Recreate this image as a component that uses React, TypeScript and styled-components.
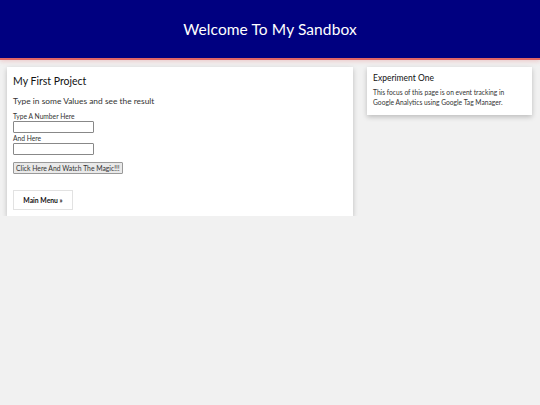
import styled, { createGlobalStyle } from 'styled-components';

const GlobalStyle = createGlobalStyle`
  html, body {
    margin: 0;
    padding: 0;
    background: #f1f1f1;
    font-family: Lato, "Open Sans", sans-serif;
    color: #111;
  }
`;

const Header = styled.header`
  height: 58px;
  background: #000080;
  border-bottom: 2px solid #e06666;
  box-shadow: 0 2px 4px rgba(230, 120, 120, 0.25);
  display: flex;
  align-items: center;
  justify-content: center;
`;

const Title = styled.h1`
  margin: 0;
  color: #fff;
  font-size: 15.5px;
  font-weight: 400;
  letter-spacing: 0.1px;
`;

const Main = styled.main`
  display: flex;
  align-items: flex-start;
  gap: 14px;
  padding: 7px 8px 0 7px;
`;

const Card = styled.section<{ $width: number; $bottom: number }>`
  width: ${p => p.$width}px;
  background: #fff;
  box-shadow: 0 2px 5px rgba(0, 0, 0, 0.22);
  box-sizing: border-box;
  padding: 6px 6px ${p => p.$bottom}px 6px;
`;

const CardTitle = styled.h2<{ $size: number; $offset: number }>`
  margin: ${p => p.$offset}px 0 0;
  font-size: ${p => p.$size}px;
  font-weight: 400;
  line-height: 1.2;
  color: #111;
`;

const Lead = styled.p`
  margin: 8px 0 6px;
  font-size: 8.4px;
  line-height: 10px;
  color: #333;
`;

const Label = styled.label`
  display: block;
  font-size: 6.7px;
  color: #333;
  line-height: 9px;
`;

const Field = styled.input`
  display: block;
  width: 81px;
  height: 12px;
  box-sizing: border-box;
  border: 1px solid #888;
  border-radius: 1px;
  margin: 0 0 1px;
  padding: 0;
`;

const MagicButton = styled.button`
  display: block;
  margin-top: 7px;
  height: 12px;
  padding: 0 2px;
  font-family: inherit;
  font-size: 6.8px;
  color: #333;
  background: #e9e9e9;
  border: 1px solid #999;
  border-radius: 1px;
`;

const MenuLink = styled.a`
  display: flex;
  align-items: center;
  justify-content: center;
  margin-top: 16px;
  width: 60px;
  height: 20px;
  box-sizing: border-box;
  border: 1px solid #e2e2e2;
  font-size: 6.8px;
  font-weight: 700;
  color: #111;
  text-decoration: none;
`;

const Body = styled.p`
  margin: 4px 0 0;
  font-size: 6.7px;
  line-height: 10px;
  color: #333;
`;

export default function App() {
  return (
    <>
      <GlobalStyle />
      <Header>
        <Title>Welcome To My Sandbox</Title>
      </Header>
      <Main>
        <Card $width={346} $bottom={6}>
          <CardTitle $size={10.5} $offset={2}>My First Project</CardTitle>
          <Lead>Type in some Values and see the result</Lead>
          <Label>Type A Number Here</Label>
          <Field type="text" />
          <Label>And Here</Label>
          <Field type="text" />
          <MagicButton>Click Here And Watch The Magic!!!</MagicButton>
          <MenuLink href="#">Main Menu »</MenuLink>
        </Card>
        <Card $width={165} $bottom={8}>
          <CardTitle $size={8.5} $offset={0}>Experiment One</CardTitle>
          <Body>
            This focus of this page is on event tracking in Google Analytics using Google Tag Manager.
          </Body>
        </Card>
      </Main>
    </>
  );
}
